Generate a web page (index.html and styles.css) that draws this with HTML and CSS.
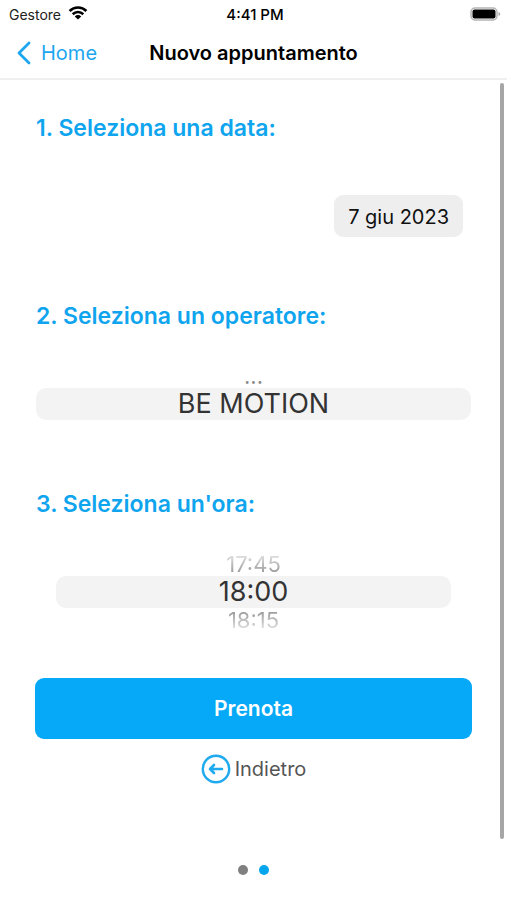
FILE: index.html
```html
<!DOCTYPE html>
<html lang="it">
<head>
<meta charset="utf-8">
<meta name="viewport" content="width=device-width, initial-scale=1">
<title>Nuovo appuntamento</title>
<link rel="stylesheet" href="styles.css">
</head>
<body>
<div class="app">
  <div class="status">
    <div class="status-left">
      <span class="carrier">Gestore</span>
      <svg width="20" height="14" viewBox="0 0 20 14" aria-hidden="true">
        <g fill="none" stroke="#000" stroke-width="2.6">
          <path d="M1.6 5a12 12 0 0 1 16.8 0"/>
          <path d="M4.7 8.2a7.6 7.6 0 0 1 10.6 0"/>
        </g>
        <path d="M10 13.6 6.8 10.4a4.6 4.6 0 0 1 6.4 0z"/>
      </svg>
    </div>
    <time>4:41 PM</time>
    <div class="status-right">
      <svg width="31" height="15" viewBox="0 0 31 15" aria-hidden="true">
        <rect x="1" y="1" width="26" height="12" rx="4" fill="#fff" stroke="#b4b4b4" stroke-width="1.5"/>
        <rect x="2.5" y="2.5" width="23" height="9" rx="2"/>
        <path d="M28.5 5q1.8.6 1.8 2t-1.8 2z" fill="#aaa"/>
      </svg>
    </div>
  </div>
  <header class="nav">
    <a class="back" href="#home">
      <svg width="16" height="24" viewBox="0 0 16 24" aria-hidden="true">
        <path d="M13 2 3 12l10 10" fill="none" stroke="currentColor" stroke-width="2.8" stroke-linecap="round" stroke-linejoin="round"/>
      </svg>
      Home
    </a>
    <h1>Nuovo appuntamento</h1>
  </header>
  <main class="content">
    <section>
      <h2>1. Seleziona una data:</h2>
      <div class="field field-date">
        <button class="date" type="button">7 giu 2023</button>
      </div>
    </section>
    <section>
      <h2 id="operator">2. Seleziona un operatore:</h2>
      <div class="field">
        <div class="wheel" role="listbox" aria-labelledby="operator">
          <div class="option" role="option">...</div>
          <div class="option selected" role="option" aria-selected="true">BE MOTION</div>
          <div class="option"></div>
        </div>
      </div>
    </section>
    <section>
      <h2 id="hour">3. Seleziona un'ora:</h2>
      <div class="field field-hour">
        <div class="wheel" role="listbox" aria-labelledby="hour">
          <div class="option before" role="option">17:45</div>
          <div class="option selected" role="option" aria-selected="true">18:00</div>
          <div class="option after" role="option">18:15</div>
        </div>
      </div>
    </section>
    <div class="actions">
      <button class="book" type="button">Prenota</button>
      <button class="return" type="button">
        <svg width="30" height="30" viewBox="0 0 30 30" aria-hidden="true">
          <g fill="none" stroke="#1fa9ee" stroke-linecap="round" stroke-linejoin="round">
            <circle cx="15" cy="15" r="13.2" stroke-width="2.4"/>
            <path d="M21 15H9.5M13 11 9 15l4 4" stroke-width="2.6"/>
          </g>
        </svg>
        Indietro
      </button>
    </div>
    <div class="scrollbar"></div>
  </main>
  <footer class="pages">
    <button class="page" type="button" aria-label="Pagina 1"></button>
    <button class="page current" type="button" aria-label="Pagina 2"></button>
  </footer>
</div>
</body>
</html>
```
FILE: styles.css
```css
* {
  box-sizing: border-box;
}

body {
  margin: 0;
  background: #fff;
  color: #000;
  font-family: Inter, "Liberation Sans", sans-serif;
}

button {
  border: 0;
  padding: 0;
  background: none;
  color: inherit;
  font: inherit;
}

h1,
h2 {
  margin: 0;
  font-weight: 600;
}

.app {
  display: flex;
  flex-direction: column;
  min-height: 100vh;
}

.status,
.nav {
  display: grid;
  grid-template-columns: 1fr auto 1fr;
  align-items: center;
}

.status {
  height: 28px;
  padding: 0 6px 0 9px;
  font-size: 15px;
}

.carrier {
  color: #222;
  font-size: 14px;
}

.status time {
  font-weight: 500;
}

.status-left {
  display: flex;
  align-items: center;
  gap: 7px;
}

.status-left svg {
  margin-bottom: 2px;
}

.status-right {
  display: flex;
  justify-content: flex-end;
}

.nav {
  height: 52px;
  padding: 0 16px;
  border-bottom: 2px solid #efefef;
}

.back {
  display: flex;
  align-items: center;
  gap: 9px;
  color: #1da6f0;
  font-size: 20px;
  text-decoration: none;
}

h1 {
  font-size: 20px;
}

.content {
  position: relative;
  flex: 1;
  display: flex;
  flex-direction: column;
  gap: 14px;
  padding: 32px 35px 0;
}

section {
  padding: 0 1px;
}

h2 {
  color: #0fa5ee;
  font-size: 23px;
  line-height: 32px;
}

.field {
  display: flex;
  align-items: center;
  height: 142px;
  padding-bottom: 0;
}

h2 + .field {
  padding-top: 2px;
}

.field-date {
  justify-content: flex-end;
  padding-right: 8px;
}

.field-hour {
  padding: 0 20px;
}

.date {
  padding: 2px 14px 0;
  border-radius: 9px;
  background: #eeeeef;
  color: #111;
  font-size: 20px;
  line-height: 40px;
}

.wheel {
  flex: 1;
  text-align: center;
}

.option {
  height: 24px;
  color: #8c8c8c;
  font-size: 22px;
  line-height: 24px;
}

.option.selected {
  height: 32px;
  border-radius: 10px;
  background: #f3f3f3;
  color: #333;
  font-size: 27px;
  line-height: 32px;
}

.before {
  -webkit-mask-image: linear-gradient(rgb(0 0 0 / 0.15), #000);
  mask-image: linear-gradient(rgb(0 0 0 / 0.15), #000);
}

.after {
  -webkit-mask-image: linear-gradient(#000, rgb(0 0 0 / 0.15));
  mask-image: linear-gradient(#000, rgb(0 0 0 / 0.15));
}

.actions {
  display: flex;
  flex-direction: column;
  align-items: center;
  gap: 15px;
  padding-top: 2px;
}

.book {
  align-self: stretch;
  height: 61px;
  border-radius: 9px;
  background: #05a9f7;
  color: #fff;
  font-size: 21px;
  font-weight: 600;
}

.return {
  display: flex;
  align-items: center;
  gap: 4px;
  color: #555;
  font-size: 20px;
}

.scrollbar {
  position: absolute;
  top: 3px;
  right: 3px;
  bottom: 0;
  width: 4px;
  border-radius: 2px;
  background: #a6a6a6;
}

.pages {
  display: flex;
  align-items: center;
  justify-content: center;
  gap: 11px;
  height: 61px;
}

.page {
  width: 10px;
  height: 10px;
  border-radius: 50%;
  background: #808080;
}

.page.current {
  background: #05a5ee;
}
```
